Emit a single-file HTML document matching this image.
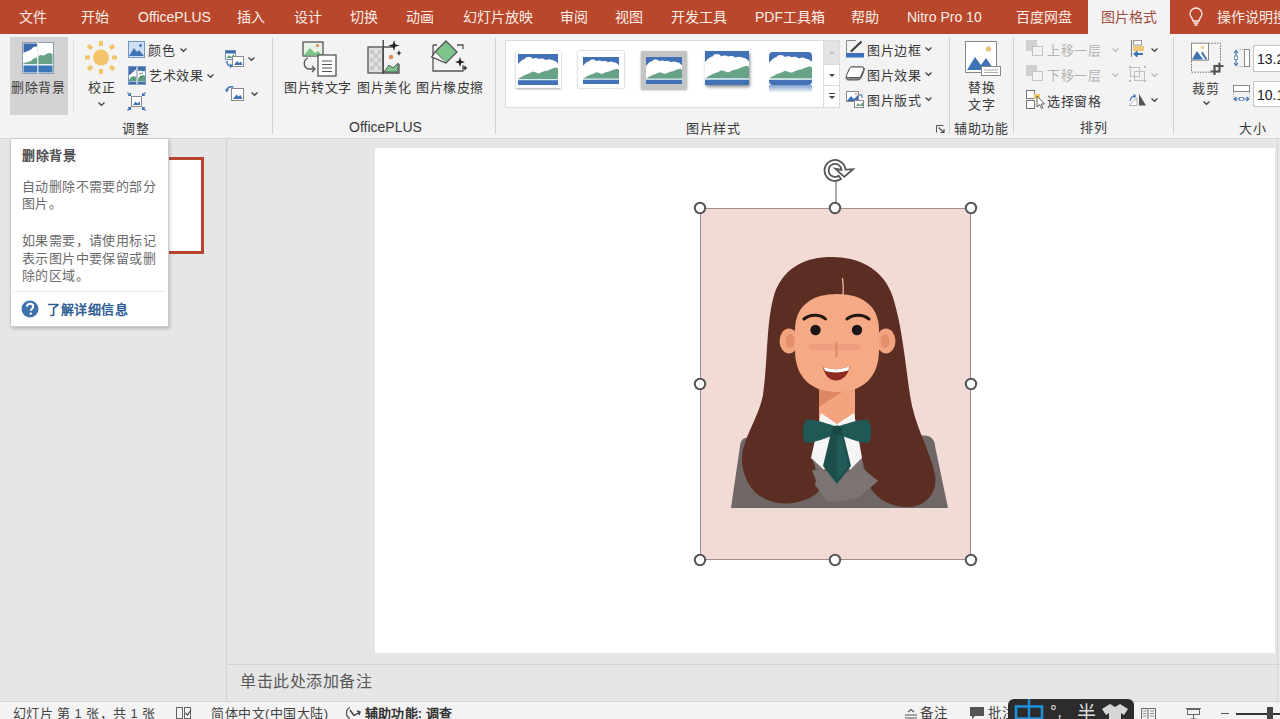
<!DOCTYPE html>
<html lang="zh-CN"><head><meta charset="utf-8">
<style>
*{margin:0;padding:0;box-sizing:border-box}
html,body{width:1280px;height:719px;overflow:hidden;background:#e6e6e6;font-family:"Liberation Sans",sans-serif;position:relative}
.a{position:absolute}
.t{position:absolute;white-space:nowrap;line-height:1;font-size:13px;letter-spacing:0.5px;color:#3a3a3a;font-weight:500}
.tab{position:absolute;white-space:nowrap;line-height:1;font-size:14px;color:#fbeee9;top:10px}
.sep{position:absolute;width:1px;background:#d4d4d4}
.chev{position:absolute;width:7px;height:4px}
svg{position:absolute;overflow:visible}
</style></head><body>

<!-- title / tab bar -->
<div class="a" style="left:0;top:0;width:1280px;height:34px;background:#b9472b"></div>
<div class="tab" style="left:19px">文件</div>
<div class="tab" style="left:81px">开始</div>
<div class="tab" style="left:138px">OfficePLUS</div>
<div class="tab" style="left:237px">插入</div>
<div class="tab" style="left:294px">设计</div>
<div class="tab" style="left:350px">切换</div>
<div class="tab" style="left:406px">动画</div>
<div class="tab" style="left:463px">幻灯片放映</div>
<div class="tab" style="left:560px">审阅</div>
<div class="tab" style="left:615px">视图</div>
<div class="tab" style="left:671px">开发工具</div>
<div class="tab" style="left:755px">PDF工具箱</div>
<div class="tab" style="left:851px">帮助</div>
<div class="tab" style="left:907px">Nitro Pro 10</div>
<div class="tab" style="left:1016px">百度网盘</div>
<div class="a" style="left:1088px;top:0;width:82px;height:35px;background:#f3f3f3"></div>
<div class="tab" style="left:1101px;top:9.5px;color:#9e4b3b">图片格式</div>
<div class="tab" style="left:1217px">操作说明搜索</div>

<!-- ribbon -->
<div class="a" style="left:0;top:34px;width:1280px;height:105px;background:#f3f3f3;border-bottom:1px solid #d8d8d8"></div>


<!-- ===== group 调整 ===== -->
<div class="a" style="left:10px;top:37px;width:58px;height:78px;background:#d3d3d3"></div>
<svg style="left:22px;top:42px" width="32" height="32" viewBox="0 0 32 32">
  <rect x="0.5" y="0.5" width="31" height="31" fill="#fff" stroke="#8c9cb0"/>
  <path d="M1.5 1.5H15.5V5C13 4 11 5 9.5 7C8 8 6 9 4.5 9.5C3 10 2 10.5 1.5 11Z" fill="#3b6aa8"/>
  <path d="M1.5 21L6 20L9 19L11 17L13 16L15.5 15.5V22H1.5Z" fill="#68a286"/>
  <path d="M16 14L19 13L22 13.5L25 11.5L28 11L30.5 12V22H16Z" fill="#68a286"/>
  <rect x="1.5" y="22.5" width="29" height="1" fill="#cfe3f2"/>
  <rect x="1.5" y="23.5" width="29" height="7" fill="#3b76b6"/>
  <rect x="15.2" y="0" width="1.2" height="32" fill="#e6eef6"/>
</svg>
<div class="t" style="left:11px;top:81px;font-size:13px">删除背景</div>
<div class="sep" style="left:73px;top:40px;height:72px;background:#e2e2e2"></div>

<svg style="left:85px;top:41px" width="32" height="33" viewBox="0 0 32 33">
  <g fill="#f2c56c">
  <circle cx="16" cy="16.5" r="8"/>
  <rect x="14" y="0" width="4" height="5"/><rect x="14" y="28" width="4" height="5"/>
  <rect x="0" y="14.5" width="5" height="4"/><rect x="27" y="14.5" width="5" height="4"/>
  <rect x="3" y="3.5" width="4" height="5" transform="rotate(-45 5 6)"/>
  <rect x="25" y="3.5" width="4" height="5" transform="rotate(45 27 6)"/>
  <rect x="3" y="24.5" width="4" height="5" transform="rotate(45 5 27)"/>
  <rect x="25" y="24.5" width="4" height="5" transform="rotate(-45 27 27)"/>
  </g>
</svg>
<div class="t" style="left:88px;top:81px">校正</div>
<svg style="left:98px;top:102px" width="7" height="4" viewBox="0 0 7 4"><path d="M0.5 0.5L3.5 3.3L6.5 0.5" fill="none" stroke="#444" stroke-width="1.3"/></svg>

<svg style="left:128px;top:41px" width="17" height="17" viewBox="0 0 17 17">
  <rect x="0.5" y="0.5" width="16" height="16" fill="#cfe0f3" stroke="#6f97c8"/>
  <path d="M1 15L6 7L9 11L11 9L16 15Z" fill="#3f73b5"/>
  <circle cx="12.5" cy="4.5" r="1.5" fill="#3f73b5"/>
</svg>
<div class="t" style="left:148px;top:44px">颜色</div>
<svg style="left:180px;top:48px" width="7" height="4" viewBox="0 0 7 4"><path d="M0.5 0.5L3.5 3.3L6.5 0.5" fill="none" stroke="#444" stroke-width="1.3"/></svg>

<svg style="left:128px;top:66px" width="18" height="19" viewBox="0 0 18 19">
  <rect x="0.5" y="0.5" width="17" height="18" fill="#fff" stroke="#7f98b8"/>
  <path d="M1 1H8V4C6 4 4 6 3 8L1 9Z" fill="#3f6fae"/>
  <path d="M10 1H17V5C15 6 13 4 10 5Z" fill="#3f6fae"/>
  <path d="M1 14L3 11L6 10L8 11V15H1Z" fill="#5f9f7c"/>
  <path d="M10 13L12 10L15 9L17 10V15H10Z" fill="#5f9f7c"/>
  <path d="M3 7L6 5M11 8L15 7M12 11L14 12" stroke="#555" stroke-width="0.8"/>
  <rect x="1" y="15.5" width="7" height="2.5" fill="#3f6fae"/><rect x="10" y="15.5" width="7" height="2.5" fill="#3f6fae"/>
  <rect x="8.3" y="0" width="1.4" height="19" fill="#9aaabb"/>
</svg>
<div class="t" style="left:149px;top:69px">艺术效果</div>
<svg style="left:207px;top:74px" width="7" height="4" viewBox="0 0 7 4"><path d="M0.5 0.5L3.5 3.3L6.5 0.5" fill="none" stroke="#444" stroke-width="1.3"/></svg>

<svg style="left:127px;top:92px" width="19" height="19" viewBox="0 0 19 19">
  <rect x="4.5" y="4.5" width="10" height="10" fill="#fff" stroke="#8a8a8a"/>
  <path d="M6 13L8.5 9.5L10.5 11.5L13 9.5V13Z" fill="#3f73b5"/>
  <g stroke="#3f73b5" stroke-width="1.2" fill="none">
  <path d="M0.5 0.5L3.5 3.5M3.5 1V3.5H1"/><path d="M18.5 0.5L15.5 3.5M15.5 1V3.5H18"/>
  <path d="M0.5 18.5L3.5 15.5M1 15.5H3.5V18"/><path d="M18.5 18.5L15.5 15.5M18 15.5H15.5V18"/>
  </g>
</svg>

<svg style="left:225px;top:50px" width="19" height="17" viewBox="0 0 19 17">
  <rect x="0.5" y="0.5" width="10" height="9" fill="#fff" stroke="#6f8fb8"/>
  <path d="M1.5 8L4 5L6 7L9 4V8Z" fill="#5f9f7c"/><rect x="1" y="1" width="9" height="2.5" fill="#3f6fae"/>
  <rect x="7.5" y="6.5" width="11" height="10" fill="#fff" stroke="#8a8a8a"/>
  <path d="M9 15L12 11L14 13L16 11.5L17.5 15Z" fill="#3f73b5"/>
  <path d="M2 11C1.5 14 3 16 6 16" fill="none" stroke="#3f73b5" stroke-width="1.4"/>
  <path d="M5 14L7 16L5 17.5" fill="none" stroke="#3f73b5" stroke-width="1.2"/>
</svg>
<svg style="left:248px;top:57px" width="7" height="4" viewBox="0 0 7 4"><path d="M0.5 0.5L3.5 3.3L6.5 0.5" fill="none" stroke="#444" stroke-width="1.3"/></svg>

<svg style="left:225px;top:85px" width="19" height="16" viewBox="0 0 19 16">
  <rect x="6.5" y="3.5" width="12" height="12" fill="#fff" stroke="#8a8a8a"/>
  <path d="M8 14L11.5 9.5L13.5 11.5L15.5 10L17.5 14Z" fill="#3f73b5"/>
  <path d="M1.5 6C2 2.5 5 1 8.5 2" fill="none" stroke="#3f73b5" stroke-width="1.6"/>
  <path d="M0 4L1.5 7.5L4 4.5Z" fill="#3f73b5"/>
</svg>
<svg style="left:251px;top:92px" width="7" height="4" viewBox="0 0 7 4"><path d="M0.5 0.5L3.5 3.3L6.5 0.5" fill="none" stroke="#444" stroke-width="1.3"/></svg>

<div class="t" style="left:122px;top:122px">调整</div>
<div class="sep" style="left:272px;top:37px;height:97px"></div>

<!-- ===== group OfficePLUS ===== -->
<svg style="left:302px;top:41px" width="35" height="36" viewBox="0 0 35 36">
  <rect x="1" y="1" width="20" height="14" fill="#e6f3e6" stroke="#555" stroke-width="1.3"/>
  <path d="M1.5 14.5L8 7L13 12L16 10L20.5 14.5Z" fill="#7cc48a"/>
  <circle cx="15.5" cy="4.5" r="1.6" fill="#e08a55"/>
  <rect x="16" y="14" width="18" height="21" fill="#fff" stroke="#555" stroke-width="1.3"/>
  <path d="M20 20H30M20 23.5H30M20 27H30M20 30.5H30" stroke="#555" stroke-width="1.2"/>
  <path d="M6 17C1 19 1 26 6 28L13 28" fill="none" stroke="#555" stroke-width="1.3"/>
  <path d="M10 25L13 28L10 31" fill="none" stroke="#555" stroke-width="1.3"/>
</svg>
<svg style="left:367px;top:40px" width="35" height="34" viewBox="0 0 35 34">
  <rect x="1" y="7" width="15" height="26" fill="#e0e0e0" stroke="#555" stroke-width="1.3"/>
  <path d="M3 10H7V14H3ZM7 14H11V18H7ZM3 18H7V22H3ZM7 22H11V26H7ZM3 26H7V30H3ZM11 10H14V14H11ZM11 18H14V22H11ZM11 26H14V30H11Z" fill="#c8c8c8"/>
  <path d="M16 7H26M16 33H32V24" fill="none" stroke="#555" stroke-width="1.3"/>
  <path d="M17 32L22 25L26 28L31 23V32Z" fill="#7cc48a" stroke="#555" stroke-width="1"/>
  <circle cx="24" cy="17" r="2.2" fill="#e08a55"/>
  <rect x="15.5" y="0" width="1.4" height="34" fill="#444"/>
  <path d="M27 0L28.2 4.3L32.5 5.5L28.2 6.7L27 11L25.8 6.7L21.5 5.5L25.8 4.3Z" fill="#222"/>
  <path d="M32 10L32.8 12.5L35 13L32.8 13.8L32 16L31.2 13.8L29 13L31.2 12.5Z" fill="#222"/>
</svg>
<svg style="left:432px;top:40px" width="36" height="32" viewBox="0 0 36 32">
  <path d="M1 5H5M1 5V31H31V25M25 5H31V9" fill="none" stroke="#555" stroke-width="1.3"/>
  <path d="M14 1L25 12L14 23L0 17L3 12Z" fill="#7cc48a" stroke="#555" stroke-width="1.3"/>
  <path d="M3 12L11 20" stroke="#555" stroke-width="1.3"/>
  <path d="M14 23L0 17L3 12" fill="#fff" stroke="#555" stroke-width="1.3"/>
  <path d="M28 17L29.2 20.8L33 22L29.2 23.2L28 27L26.8 23.2L23 22L26.8 20.8Z" fill="#222"/>
  <path d="M33 25L33.8 27.2L36 28L33.8 28.8L33 31L32.2 28.8L30 28L32.2 27.2Z" fill="#222"/>
</svg>
<div class="t" style="left:284px;top:81px">图片转文字</div>
<div class="t" style="left:357px;top:81px">图片美化</div>
<div class="t" style="left:416px;top:81px">图片橡皮擦</div>
<div class="t" style="left:349px;top:120px;font-size:14px;letter-spacing:0">OfficePLUS</div>
<div class="sep" style="left:495px;top:37px;height:97px"></div>


<!-- ===== group 图片样式 ===== -->
<div class="a" style="left:505px;top:40px;width:335px;height:68px;background:#fff;border:1px solid #dcdcdc"></div>
<svg style="left:0;top:0;width:0;height:0">
  <defs>
    <symbol id="pic" viewBox="0 0 40 31" preserveAspectRatio="none">
      <rect width="40" height="31" fill="#fff"/>
      <path d="M0 0H40V9.5C38 7 36 6.5 34 6C32 5 30 5 28 6C26 4.5 23 4 21 5C19 3.5 16 4 15 5C13 2 8 2 7 5C5 5 3 7 2 8L0 10Z" fill="#4272b5"/>
      <path d="M0 25L4 22.5L8 20.5L11 19.5L15 17.5L18 18.5L21 19.5L24 18L27 17L30 16.5L33 15L36 14L38 13.5L40 14.5V25Z" fill="#68a387"/>
      <rect y="25" width="40" height="1.2" fill="#d5ecf0"/>
      <rect y="26.2" width="40" height="4.8" fill="#4272b5"/>
    </symbol>
  </defs>
</svg>
<!-- thumb 1: white frame w/ shadow -->
<div class="a" style="left:516px;top:51px;width:45px;height:37px;background:#fff;box-shadow:0 1px 2px rgba(0,0,0,.35)"></div>
<svg style="left:518px;top:54px" width="40" height="31"><use href="#pic" width="40" height="31"/></svg>
<!-- thumb 2: thick white frame -->
<div class="a" style="left:578px;top:51px;width:46px;height:37px;background:#fff;box-shadow:0 0 2px rgba(0,0,0,.35)"></div>
<svg style="left:583px;top:57px" width="36" height="27"><use href="#pic" width="36" height="27"/></svg>
<!-- thumb 3: gray thick frame -->
<div class="a" style="left:641px;top:51px;width:46px;height:38px;background:#c4c4c4;box-shadow:0 1px 2px rgba(0,0,0,.35)"></div>
<svg style="left:646px;top:57px" width="36" height="27"><use href="#pic" width="36" height="27"/></svg>
<!-- thumb 4: shadow -->
<div class="a" style="left:705px;top:51px;width:44px;height:34px;background:#fff;box-shadow:1px 2px 3px rgba(0,0,0,.45)"></div>
<svg style="left:705px;top:51px" width="44" height="34"><use href="#pic" width="44" height="34"/></svg>
<!-- thumb 5: rounded + reflection -->
<svg style="left:769px;top:52px" width="43" height="41" viewBox="0 0 43 41">
  <defs>
    <clipPath id="rr"><rect width="43" height="33" rx="4"/></clipPath>
    <linearGradient id="refl" x1="0" y1="0" x2="0" y2="1"><stop offset="0" stop-color="#4674b4" stop-opacity=".7"/><stop offset="1" stop-color="#4674b4" stop-opacity="0"/></linearGradient>
  </defs>
  <g clip-path="url(#rr)"><use href="#pic" width="43" height="33"/></g>
  <rect y="33" width="43" height="8" fill="url(#refl)"/>
</svg>
<!-- gallery scroll -->
<div class="a" style="left:823px;top:40px;width:17px;height:68px;border-left:1px solid #dcdcdc"></div>
<div class="a" style="left:824px;top:41px;width:15px;height:23px;background:#e3e3e3"></div>
<div class="a" style="left:824px;top:64px;width:15px;height:1px;background:#dcdcdc"></div>
<div class="a" style="left:824px;top:85px;width:15px;height:1px;background:#dcdcdc"></div>
<svg style="left:829px;top:51px" width="6" height="3" viewBox="0 0 6 3"><path d="M0 3L3 0L6 3Z" fill="#bdbdbd"/></svg>
<svg style="left:829px;top:74px" width="6" height="3" viewBox="0 0 6 3"><path d="M0 0L3 3L6 0Z" fill="#444"/></svg>
<svg style="left:829px;top:93px" width="6" height="6" viewBox="0 0 6 6"><rect width="6" height="1" fill="#444"/><path d="M0 3L3 6L6 3Z" fill="#444"/></svg>

<svg style="left:842px;top:36px" width="30" height="24" viewBox="842 36 30 24">
  <path d="M846.5 55V40.5H856" fill="none" stroke="#8a8a8a" stroke-width="1"/>
  <path d="M851 51.5L861.5 41.5" stroke="#444" stroke-width="2.4"/>
  <path d="M850.5 52.5L851.5 50.5L852.5 51.5Z" fill="#444"/>
  <rect x="846" y="53" width="18" height="4.5" fill="#3b6fb8"/>
</svg>
<div class="t" style="left:867px;top:44px">图片边框</div>
<svg style="left:925px;top:47px" width="7" height="4" viewBox="0 0 7 4"><path d="M0.5 0.5L3.5 3.3L6.5 0.5" fill="none" stroke="#444" stroke-width="1.3"/></svg>
<svg style="left:842px;top:62px" width="30" height="24" viewBox="842 62 30 24">
  <path d="M852 67H862C864 67 865 68.5 864 70.5L862 76C861 79 859.5 80 857 80H848.5C846.5 80 845.5 78.5 846.3 76.5L849 70C849.8 68 850.5 67 852 67Z" fill="#8c8c8c" stroke="#555" stroke-width="1"/>
  <path d="M851.5 67H861.5C863.5 67 864 68.5 863.3 70.5L861 75.5C860.3 77 859.5 77.5 858 77.5H848.5C846.8 77.5 846 76.5 846.8 74.5L849 70C849.7 68 850.3 67 851.5 67Z" fill="#fff" stroke="#555" stroke-width="1"/>
</svg>
<div class="t" style="left:867px;top:69px">图片效果</div>
<svg style="left:925px;top:72px" width="7" height="4" viewBox="0 0 7 4"><path d="M0.5 0.5L3.5 3.3L6.5 0.5" fill="none" stroke="#444" stroke-width="1.3"/></svg>
<svg style="left:846px;top:91px" width="18" height="17" viewBox="0 0 18 17">
  <rect x="0.5" y="0.5" width="12" height="10" fill="#fff" stroke="#8a8a8a"/>
  <path d="M1 10L5 5L8 8L12 4V10Z" fill="#3f6fb5"/>
  <circle cx="10" cy="3" r="1" fill="#e08a55"/>
  <rect x="8.5" y="9.5" width="9" height="7" fill="#fff" stroke="#8a8a8a"/>
  <path d="M10 15L12 12L14 14L17 11V15Z" fill="#6aa585"/>
  <path d="M13 4L16 4L16 7" fill="none" stroke="#3f6fb5" stroke-width="1"/>
</svg>
<div class="t" style="left:867px;top:94px">图片版式</div>
<svg style="left:925px;top:97px" width="7" height="4" viewBox="0 0 7 4"><path d="M0.5 0.5L3.5 3.3L6.5 0.5" fill="none" stroke="#444" stroke-width="1.3"/></svg>
<div class="t" style="left:686px;top:122px">图片样式</div>
<svg style="left:936px;top:125px" width="9" height="8" viewBox="0 0 9 8">
  <path d="M0.5 7.5V0.5H7.5" fill="none" stroke="#555" stroke-width="1"/>
  <path d="M2.5 2.5L8 7.5M8 4V7.5H4.5" fill="none" stroke="#555" stroke-width="1.2"/>
</svg>
<div class="sep" style="left:949px;top:37px;height:97px"></div>

<!-- ===== group 辅助功能 ===== -->
<svg style="left:965px;top:41px" width="36" height="35" viewBox="0 0 36 35">
  <rect x="0.5" y="0.5" width="31" height="31" fill="#fff" stroke="#888"/>
  <circle cx="23.5" cy="8" r="2.6" fill="#e8c070"/>
  <path d="M2 29L10 16L16 24L21 17L28 27V29Z" fill="#3f73b5"/>
  <rect x="16.5" y="25.5" width="19" height="9" fill="#fff" stroke="#888"/>
  <path d="M19 29H33M19 31.5H33" stroke="#999" stroke-width="0.8"/>
</svg>
<div class="t" style="left:968px;top:81px">替换</div>
<div class="t" style="left:968px;top:98px">文字</div>
<div class="t" style="left:954px;top:122px">辅助功能</div>
<div class="sep" style="left:1013px;top:37px;height:97px"></div>

<!-- ===== group 排列 ===== -->
<svg style="left:1026px;top:40px" width="17" height="16" viewBox="0 0 17 16">
  <rect x="0" y="0" width="11" height="11" fill="#d0d0d0"/>
  <rect x="6.5" y="6.5" width="10" height="9" fill="#f3f3f3" stroke="#c4c4c4"/>
</svg>
<div class="t" style="left:1047px;top:44px;color:#b4b4b4">上移一层</div>
<svg style="left:1112px;top:48px" width="7" height="4" viewBox="0 0 7 4"><path d="M0.5 0.5L3.5 3.3L6.5 0.5" fill="none" stroke="#bbb" stroke-width="1.3"/></svg>
<svg style="left:1026px;top:65px" width="17" height="16" viewBox="0 0 17 16">
  <rect x="0" y="0" width="11" height="11" fill="#d0d0d0"/>
  <rect x="6.5" y="6.5" width="10" height="9" fill="#f3f3f3" stroke="#c4c4c4"/>
</svg>
<div class="t" style="left:1047px;top:69px;color:#b4b4b4">下移一层</div>
<svg style="left:1112px;top:73px" width="7" height="4" viewBox="0 0 7 4"><path d="M0.5 0.5L3.5 3.3L6.5 0.5" fill="none" stroke="#bbb" stroke-width="1.3"/></svg>
<svg style="left:1026px;top:90px" width="19" height="19" viewBox="0 0 19 19">
  <rect x="0.5" y="0.5" width="8" height="8" fill="#fff" stroke="#777"/>
  <rect x="0.5" y="10.5" width="8" height="8" fill="#fff" stroke="#777"/>
  <rect x="8" y="4" width="6" height="5" fill="#f0c96a"/>
  <path d="M11 6V17L13.5 14.5L15.5 18.5L17 17.8L15 14H18.5Z" fill="#fff" stroke="#555" stroke-width="0.9"/>
</svg>
<div class="t" style="left:1047px;top:95px">选择窗格</div>

<svg style="left:1127px;top:38px" width="20" height="20" viewBox="1127 38 20 20">
  <path d="M1131.5 40V57" stroke="#888" stroke-width="1.2"/>
  <rect x="1133.5" y="40.5" width="8" height="4.5" fill="#fff" stroke="#999" stroke-width="1"/>
  <rect x="1133" y="46" width="11" height="5" fill="#f0c878"/>
  <path d="M1143 54H1134.5M1137.5 51.5L1134.5 54L1137.5 56.5" fill="none" stroke="#3b72b3" stroke-width="1.8"/>
</svg>
<svg style="left:1151px;top:48px" width="7" height="4" viewBox="0 0 7 4"><path d="M0.5 0.5L3.5 3.3L6.5 0.5" fill="none" stroke="#444" stroke-width="1.3"/></svg>
<svg style="left:1127px;top:64px" width="20" height="20" viewBox="1127 64 20 20">
  <g fill="none" stroke="#c2c2c2" stroke-width="1">
  <rect x="1130.5" y="67.5" width="9" height="9"/>
  <rect x="1134.5" y="71.5" width="10" height="9"/>
  </g>
  <g fill="#bdbdbd"><rect x="1129" y="66" width="2" height="2"/><rect x="1144" y="66" width="2" height="2"/><rect x="1129" y="80" width="2" height="2"/><rect x="1144" y="80" width="2" height="2"/></g>
</svg>
<svg style="left:1151px;top:73px" width="7" height="4" viewBox="0 0 7 4"><path d="M0.5 0.5L3.5 3.3L6.5 0.5" fill="none" stroke="#bbb" stroke-width="1.3"/></svg>
<svg style="left:1128px;top:94px" width="19" height="12" viewBox="0 0 19 12">
  <path d="M1 11.5L9 4V11.5Z" fill="#fff" stroke="#aaa" stroke-width="0.9"/>
  <path d="M11 0L18 11.5H11Z" fill="#555"/>
  <path d="M2 7C3 3 5 2 7 2M5.5 0.5L7.5 2L5.8 3.8" fill="none" stroke="#3f73b5" stroke-width="1.1"/>
</svg>
<svg style="left:1151px;top:98px" width="7" height="4" viewBox="0 0 7 4"><path d="M0.5 0.5L3.5 3.3L6.5 0.5" fill="none" stroke="#444" stroke-width="1.3"/></svg>
<div class="t" style="left:1080px;top:121px">排列</div>
<div class="sep" style="left:1173px;top:37px;height:97px"></div>

<!-- ===== group 大小 ===== -->
<svg style="left:1186px;top:38px" width="44" height="42" viewBox="1186 38 44 42">
  <path d="M1208.5 43.2H1220.5V62M1191.5 61V72.2H1210" fill="none" stroke="#777" stroke-width="1" stroke-dasharray="1.6 1.2"/>
  <rect x="1191.5" y="43.2" width="17" height="17" fill="#fdfbf5" stroke="#888" stroke-width="1"/>
  <circle cx="1202.5" cy="47.5" r="1.8" fill="#efd49a"/>
  <path d="M1192 59.5L1197 51L1203 59.5Z" fill="#3b70ad"/>
  <path d="M1201 53L1202.5 51.5L1207.5 59.5H1205.5Z" fill="#3b70ad"/>
  <path d="M1199 53.5L1204.5 59.5H1203Z" fill="#b8dcf2"/>
  <g fill="none" stroke="#555" stroke-width="2.2">
    <rect x="1214.5" y="66" width="5" height="5.5"/>
    <path d="M1219.5 62.5V66H1223.5M1210.5 71.5H1214.5V75"/>
  </g>
</svg>
<div class="t" style="left:1192px;top:82px">裁剪</div>
<svg style="left:1203px;top:101px" width="7" height="4" viewBox="0 0 7 4"><path d="M0.5 0.5L3.5 3.3L6.5 0.5" fill="none" stroke="#444" stroke-width="1.3"/></svg>

<svg style="left:1233px;top:49px" width="17" height="18" viewBox="0 0 17 18">
  <rect x="11.5" y="0.5" width="5" height="17" fill="#fff" stroke="#888"/>
  <path d="M3 2V16M1 4L3 1.5L5 4M1 14L3 16.5L5 14" fill="none" stroke="#3f73b5" stroke-width="1.1"/>
  <rect x="1.5" y="7" width="3" height="3.5" fill="#fff" stroke="#5a7fb0" stroke-width="0.8"/>
  <path d="M5 0.5H11M5 17.5H11" stroke="#999" stroke-dasharray="1 1" stroke-width="0.8"/>
</svg>
<div class="a" style="left:1253px;top:45px;width:40px;height:27px;background:#fff;border:1px solid #c6c6c6"></div>
<div class="t" style="left:1257px;top:52px;font-size:14px;letter-spacing:0;color:#222">13.2</div>
<svg style="left:1233px;top:85px" width="17" height="18" viewBox="0 0 17 18">
  <rect x="0.5" y="0.5" width="16" height="6" fill="#fff" stroke="#888"/>
  <path d="M1 14H16M3.5 12L1 14L3.5 16M13.5 12L16 14L13.5 16" fill="none" stroke="#3f73b5" stroke-width="1.1"/>
  <rect x="6.5" y="12.5" width="4" height="3" fill="#fff" stroke="#5a7fb0" stroke-width="0.8"/>
  <path d="M0.5 7V12M16.5 7V12" stroke="#999" stroke-dasharray="1 1" stroke-width="0.8"/>
</svg>
<div class="a" style="left:1253px;top:81px;width:40px;height:26px;background:#fff;border:1px solid #c6c6c6"></div>
<div class="t" style="left:1257px;top:88px;font-size:14px;letter-spacing:0;color:#222">10.1</div>
<div class="t" style="left:1239px;top:122px">大小</div>
<svg style="left:1189px;top:8px" width="14" height="18" viewBox="0 0 14 18">
  <path d="M4 13C4 10 1 9 1 6A6 6 0 0 1 13 6C13 9 10 10 10 13Z" fill="none" stroke="#fbeee9" stroke-width="1.3"/>
  <path d="M4.5 15H9.5M5.5 17H8.5" stroke="#fbeee9" stroke-width="1.3"/>
</svg>

<!-- work area -->
<div class="a" style="left:226px;top:139px;width:1px;height:562px;background:#d2d2d2"></div>
<div class="a" style="left:375px;top:148px;width:900px;height:505px;background:#fff"></div>
<div class="a" style="left:227px;top:664px;width:1053px;height:1px;background:#d2d2d2"></div>
<div class="t" style="left:240px;top:674px;font-size:16px;color:#595959">单击此处添加备注</div>

<!-- status bar -->
<div class="a" style="left:0;top:701px;width:1280px;height:18px;background:#f3f3f3;border-top:1px solid #d6d6d6"></div>


<!-- thumbnail frame -->
<div class="a" style="left:40px;top:157px;width:164px;height:97px;background:#fff;border:3px solid #b5452d"></div>

<!-- tooltip -->
<div class="a" style="left:10px;top:138px;width:159px;height:189px;background:#fff;border:1px solid #cdcdcd;box-shadow:1px 2px 3px rgba(0,0,0,.18)"></div>
<div class="t" style="left:22px;top:149px;font-weight:bold;color:#505050">删除背景</div>
<div class="t" style="left:22px;top:180px;font-size:13px;letter-spacing:0.4px;color:#6b6b6b">自动删除不需要的部分</div>
<div class="t" style="left:22px;top:197px;font-size:13px;letter-spacing:0.4px;color:#6b6b6b">图片。</div>
<div class="t" style="left:22px;top:234px;font-size:13px;letter-spacing:0.4px;color:#6b6b6b">如果需要，请使用标记</div>
<div class="t" style="left:22px;top:252px;font-size:13px;letter-spacing:0.4px;color:#6b6b6b">表示图片中要保留或删</div>
<div class="t" style="left:22px;top:269px;font-size:13px;letter-spacing:0.4px;color:#6b6b6b">除的区域。</div>
<div class="a" style="left:12px;top:291px;width:153px;height:1px;background:#ececec"></div>
<svg style="left:21px;top:300px" width="18" height="18" viewBox="0 0 18 18">
  <circle cx="9" cy="9" r="8.5" fill="#3e72ab"/>
  <path d="M6 6.8C6 4.8 7.4 3.8 9.1 3.8C10.9 3.8 12.2 4.9 12.2 6.5C12.2 8.6 9.8 8.8 9.8 10.8" fill="none" stroke="#fff" stroke-width="2"/>
  <circle cx="9.8" cy="13.6" r="1.2" fill="#fff"/>
</svg>
<div class="t" style="left:47px;top:303px;font-weight:bold;color:#2f5e96">了解详细信息</div>

<!-- picture -->
<div class="a" style="left:700px;top:208px;width:271px;height:352px;background:#f3dbd5;border:1px solid #9a8f8c"></div>
<svg style="left:700px;top:208px" width="271" height="352" viewBox="700 208 271 352">
  <!-- jacket -->
  <path d="M745 438L790 430L880 430L928 436C933 438 935 442 935 446L948 508H731L740 446C741 441 742 439 745 438Z" fill="#6e6765"/>
  <!-- hair back + lobes -->
  <path d="M832 257C858 257 881 268 891 292C901 318 905 360 910 395C914 425 930 450 935 475C938 493 925 506 910 507C893 508 878 500 871 489C864 470 858 445 853 410L853 390L821 390L821 420C813 450 812 470 821 489C812 500 795 505 778 503C758 500 744 485 742 462C741 440 758 420 763 395C768 360 766 320 775 292C785 267 805 257 832 257Z" fill="#5b2d23"/>
  <!-- neck -->
  <path d="M819 380H855V420L837 428L819 420Z" fill="#f2a47f"/>
  <path d="M819 386H851L819 407Z" fill="#dd8763"/>
  <!-- ears -->
  <ellipse cx="789" cy="341" rx="9.5" ry="12.5" fill="#f2a47f"/>
  <ellipse cx="886" cy="341" rx="9.5" ry="12.5" fill="#f2a47f"/>
  <ellipse cx="790" cy="341" rx="4.5" ry="7" fill="#e58e6a"/>
  <ellipse cx="885" cy="341" rx="4.5" ry="7" fill="#e58e6a"/>
  <!-- face -->
  <path d="M795 330C795 305 813 294 837 294C861 294 879 305 879 330L879 350C879 378 862 392 837 392C812 392 795 378 795 350Z" fill="#f6a985"/>
  <!-- part -->
  <path d="M842.5 278C843.5 285 843.5 290 843 296" stroke="#e9b7a0" stroke-width="1.3" fill="none"/>
  <!-- blush band -->
  <rect x="809" y="344" width="52" height="6" rx="3" fill="#ec9a7c" opacity=".8"/>
  <path d="M836.5 342V357" stroke="#dc8b6a" stroke-width="2.2"/>
  <!-- brows -->
  <path d="M804 319C810 314 820 314 825.5 319" stroke="#23160f" stroke-width="3" fill="none" stroke-linecap="round"/>
  <path d="M847 319C853 314 863 314 869 319" stroke="#23160f" stroke-width="3" fill="none" stroke-linecap="round"/>
  <!-- eyes -->
  <circle cx="815.5" cy="330" r="5.2" fill="#1c1515"/>
  <circle cx="857" cy="330" r="5.2" fill="#1c1515"/>
  <!-- mouth -->
  <path d="M823 367C832 370 842 370 850 366C848 376 842 380.5 836 380.5C829 380.5 824.5 375 823 367Z" fill="#8e2c22"/>
  <path d="M823.5 367C832 370 842 370 849.5 366L848.5 370.5C840 373 832 373 825 371Z" fill="#fbfbfb"/>
  <!-- collar -->
  <path d="M821 413L837 424L854 413L862 458L850 470L837 445L824 470L811 458Z" fill="#f5f5f5"/>
  <!-- lapels -->
  <path d="M811 458L824 470L836 500L828 503L815 485L818 470Z" fill="#7b7472"/>
  <path d="M862 458L850 470L836 500L855 498L878 481L862 468Z" fill="#7b7472"/>
  <path d="M812 470L818 486L836 502L858 498L878 481L870 476Z" fill="#7b7472"/>
  <!-- bow -->
  <path d="M837 427C828 424 815 419 806 420C802 426 802 435 805 443C815 443 828 437 837 434Z" fill="#1f5956"/>
  <path d="M837 427C846 424 859 419 868 420C872 426 872 435 869 443C859 443 846 437 837 434Z" fill="#1f5956"/>
  <path d="M831 433L843 433L851 466L837 484L823 466Z" fill="#1c4f4c"/>
  <path d="M837 436L842 436L848 466L837 480Z" fill="#246360" opacity=".6"/>
  <ellipse cx="837" cy="430" rx="5.5" ry="4.5" fill="#184744"/>
</svg>
<!-- handles -->
<svg style="left:690px;top:155px" width="292" height="416" viewBox="690 155 292 416">
  <path d="M836 182V202" stroke="#8c8c8c" stroke-width="1.5"/>
  <g fill="#fff" stroke="#555" stroke-width="2">
  <circle cx="700" cy="208" r="5.2"/><circle cx="835" cy="208" r="5.2"/><circle cx="971" cy="208" r="5.2"/>
  <circle cx="700" cy="384" r="5.2"/><circle cx="971" cy="384" r="5.2"/>
  <circle cx="700" cy="560" r="5.2"/><circle cx="835" cy="560" r="5.2"/><circle cx="971" cy="560" r="5.2"/>
  </g>
  <path d="M841 179.1A10.5 10.5 0 1 1 845.5 169.6L853 169.2L844.2 176.9L835.4 168.8L841.5 169.9A6.5 6.5 0 1 0 838.7 175.8Z" fill="#fff" stroke="#555" stroke-width="1.8" stroke-linejoin="miter"/>
</svg>

<!-- status bar items -->
<div class="t" style="left:13px;top:707px;font-size:13px;letter-spacing:0.4px;color:#444">幻灯片 第 1 张，共 1 张</div>
<svg style="left:176px;top:707px" width="16" height="12" viewBox="0 0 16 12">
  <rect x="0.5" y="0.5" width="6" height="11" fill="none" stroke="#666"/>
  <rect x="8.5" y="0.5" width="6" height="11" fill="none" stroke="#666"/>
  <path d="M9.5 6L11.5 8L15 3" fill="none" stroke="#444" stroke-width="1.2"/>
</svg>
<div class="t" style="left:211px;top:707px;font-size:13px;color:#444">简体中文(中国大陆)</div>
<svg style="left:345px;top:706px" width="18" height="13" viewBox="0 0 18 13">
  <path d="M5 1.5C2.5 2.5 1.5 4.5 1.5 7C1.5 9.5 2.5 11.5 5 12.5" fill="none" stroke="#555" stroke-width="1.3"/>
  <path d="M5 4L9 9.5L15 6M12 5L15 6L14 9" fill="none" stroke="#444" stroke-width="1.4"/>
</svg>
<div class="t" style="left:365px;top:707px;font-size:13px;letter-spacing:0.2px;color:#333;font-weight:bold">辅助功能: 调查</div>
<svg style="left:905px;top:709px" width="12" height="10" viewBox="0 0 12 10">
  <path d="M3 3L6 0.5L9 3M0 6H12M0 9H12" fill="none" stroke="#555" stroke-width="1.1"/>
</svg>
<div class="t" style="left:920px;top:707px;font-size:13.5px;color:#444">备注</div>
<svg style="left:969px;top:707px" width="16" height="12" viewBox="0 0 16 12">
  <path d="M1 0H15V9H6L3 12V9H1Z" fill="#555"/>
</svg>
<div class="t" style="left:988px;top:707px;font-size:13.5px;color:#444">批注</div>
<div class="a" style="left:1008px;top:699px;width:126px;height:25px;background:#2c2c2c;border-radius:6px"></div>
<svg style="left:1014px;top:699px" width="30" height="20" viewBox="0 0 30 20">
  <path d="M15 0V20" stroke="#1f8fdc" stroke-width="2.4"/>
  <rect x="2" y="7.5" width="26" height="12" fill="none" stroke="#1f8fdc" stroke-width="2.6"/>
</svg>
<div class="t" style="left:1050px;top:703px;font-size:17px;color:#ddd">°,</div>
<div class="t" style="left:1077px;top:704px;font-size:19px;color:#ddd">半</div>
<svg style="left:1102px;top:704px" width="26" height="16" viewBox="0 0 26 16">
  <path d="M8 0L13 3L18 0L26 5L22 11L19 9V16H7V9L4 11L0 5Z" fill="#d6d6d6"/>
</svg>
<svg style="left:1141px;top:708px" width="15" height="11" viewBox="0 0 15 11">
  <path d="M0.5 0.5H7V11M7.5 0.5H14.5V11M0.5 0.5V11" fill="none" stroke="#666"/>
  <path d="M2 3H5.5M2 5.5H5.5M2 8H5.5M9 3H13M9 5.5H13M9 8H13" stroke="#777" stroke-width="0.8"/>
</svg>
<svg style="left:1186px;top:708px" width="15" height="11" viewBox="0 0 15 11">
  <rect x="1.5" y="1.5" width="12" height="5" fill="none" stroke="#666"/>
  <path d="M0 0.5H15M7.5 6.5V11M4 11H11" fill="none" stroke="#666"/>
</svg>
<div class="a" style="left:1221px;top:713px;width:8px;height:1px;background:#555"></div>
<div class="a" style="left:1236px;top:713px;width:44px;height:2px;background:#333"></div>
<div class="a" style="left:1267px;top:707px;width:6px;height:12px;background:#444"></div>
<div class="a" style="left:1277px;top:139px;width:1px;height:562px;background:#d6d6d6"></div>

</body></html>
